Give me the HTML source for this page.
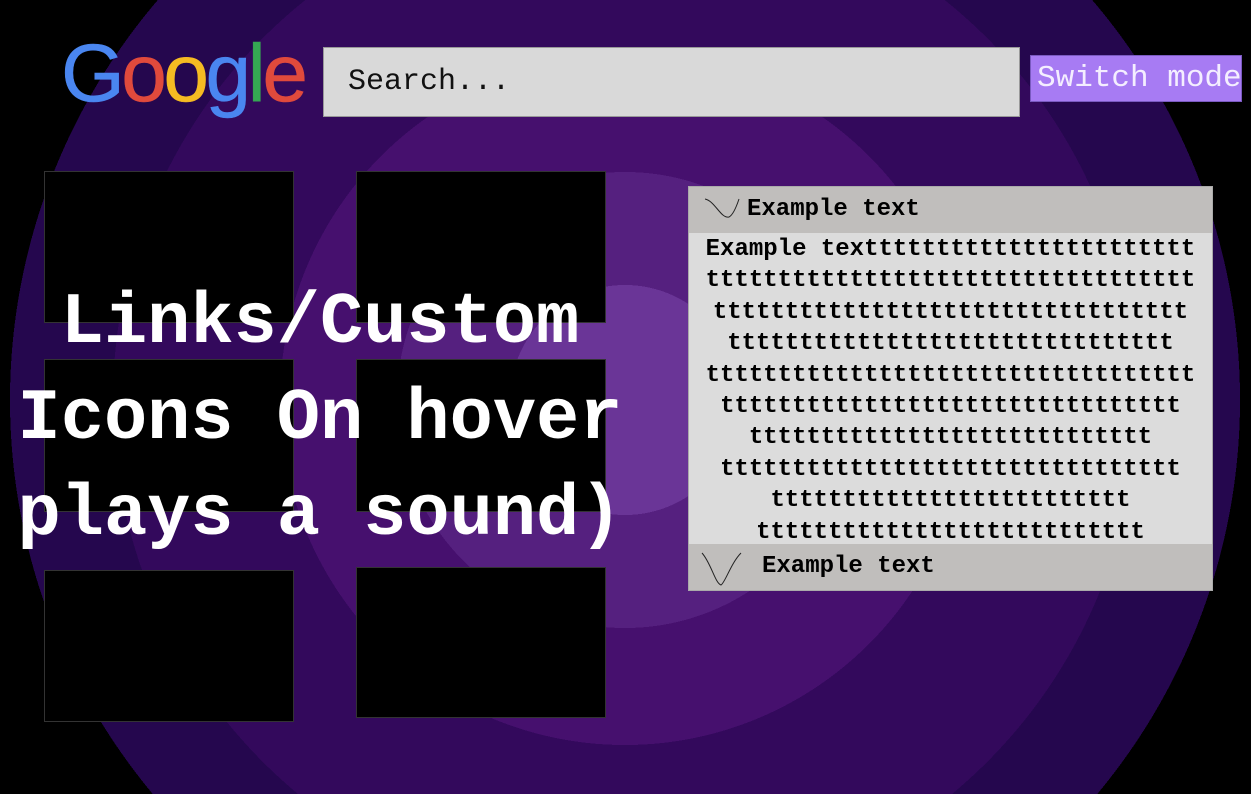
<!DOCTYPE html>
<html><head><meta charset="utf-8"><style>
*{margin:0;padding:0;box-sizing:border-box}
body{width:1251px;height:794px;overflow:hidden;position:relative;font-family:"Liberation Mono",monospace;
background:radial-gradient(circle at 625px 400px,#6a3597 0,#6a3597 115px,#55207f 115px,#55207f 228px,#46106e 228px,#46106e 345px,#33095c 345px,#33095c 512px,#25074e 512px,#25074e 615px,#000 615px);}
.box{position:absolute;background:#000;border:1px solid #333}
.abs{position:absolute}
.google{left:61px;top:33px;font-family:"Liberation Sans",sans-serif;font-size:82px;letter-spacing:-3.5px;line-height:1;-webkit-text-stroke:0.5px}
.search{left:323px;top:47px;width:697px;height:70px;background:#d9d9d9;border:1px solid #999;font-size:30px;padding-left:24px;line-height:68px;color:#111}
.switch{left:1030px;top:55px;width:212px;height:47px;background:#a77bf3;border:1px solid #7a5ac0;color:#f4eeff;font-size:31px;line-height:45px;white-space:nowrap;overflow:hidden;padding-left:6px}
.big{left:0;top:275px;width:640px;text-align:center;color:#fff;font-weight:bold;font-size:72px;line-height:96px;white-space:nowrap}
.panel{left:688px;top:186px;width:525px;height:405px;background:#dcdcdc;border:1px solid #aaa;font-weight:bold;font-size:24px;color:#000}
.hd{position:absolute;left:0;width:100%;height:46px;background:#c0bebc;line-height:46px}
.body{position:absolute;top:46px;left:0;width:100%;text-align:center;line-height:31.4px;padding-top:1px;white-space:nowrap}
</style></head><body>
<div class="box" style="left:44px;top:171px;width:250px;height:152px"></div>
<div class="box" style="left:356px;top:171px;width:250px;height:152px"></div>
<div class="box" style="left:44px;top:359px;width:250px;height:153px"></div>
<div class="box" style="left:356px;top:359px;width:250px;height:153px"></div>
<div class="box" style="left:44px;top:570px;width:250px;height:152px"></div>
<div class="box" style="left:356px;top:567px;width:250px;height:151px"></div>

<div class="abs google"><span style="color:#4a86f0">G</span><span style="color:#e04a3c">o</span><span style="color:#f5bb22">o</span><span style="color:#4a86f0">g</span><span style="color:#35a853">l</span><span style="color:#e04a3c">e</span></div>
<div class="abs search">Search...</div>
<div class="abs switch">Switch mode</div>

<div class="abs big">Links/Custom<br>Icons On hover<br>plays a sound)</div>

<div class="abs panel">
<div class="hd" style="top:0;padding-left:58px">Example text</div>
<svg class="abs" style="left:14px;top:8px" width="40" height="30"><path d="M2 4 C12 6 18 24 26 22 C30 20 34 10 36 4" fill="none" stroke="#222" stroke-width="1"/></svg>
<div class="body">Example texttttttttttttttttttttttt<br>tttttttttttttttttttttttttttttttttt<br>ttttttttttttttttttttttttttttttttt<br>ttttttttttttttttttttttttttttttt<br>tttttttttttttttttttttttttttttttttt<br>tttttttttttttttttttttttttttttttt<br>tttttttttttttttttttttttttttt<br>tttttttttttttttttttttttttttttttt<br>ttttttttttttttttttttttttt<br>ttttttttttttttttttttttttttt</div>
<div class="hd" style="top:357px;padding-left:73px">Example text</div>
<svg class="abs" style="left:10px;top:362px" width="50" height="40"><path d="M3 4 C12 14 16 34 22 36 C26 34 32 14 42 4" fill="none" stroke="#222" stroke-width="1"/></svg>
</div>
</body></html>
